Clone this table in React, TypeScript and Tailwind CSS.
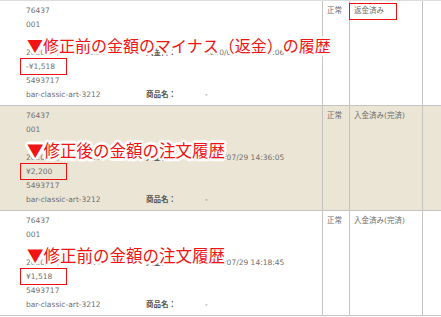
import * as React from "react"

type Row = {
  bg: string
  note: string
  noteSize: string
  date1: string
  date2: string
  price: string
  status: string
  statusBoxed?: boolean
}

const rows: Row[] = [
  {
    bg: "bg-white",
    note: "▼修正前の金額のマイナス（返金）の履歴",
    noteSize: "text-[16px]",
    date1: "2020/07/29 14:36:05",
    date2: "2020/07/29 14:36:06",
    price: "-¥1,518",
    status: "返金済み",
    statusBoxed: true,
  },
  {
    bg: "bg-[#ebe5d5]",
    note: "▼修正後の金額の注文履歴",
    noteSize: "text-[16.5px]",
    date1: "2020/07/29 14:36:05",
    date2: "2020/07/29 14:36:05",
    price: "¥2,200",
    status: "入金済み(完済)",
  },
  {
    bg: "bg-white",
    note: "▼修正前の金額の注文履歴",
    noteSize: "text-[16.5px]",
    date1: "2020/07/29 14:18:45",
    date2: "2020/07/29 14:18:45",
    price: "¥1,518",
    status: "入金済み(完済)",
  },
]

function OrderRow({ row }: { row: Row }) {
  return (
    <div className={`relative flex border-b border-[#c4c4c4] ${row.bg}`}>
      <div className="w-[323px] shrink-0 border-r border-[#c4c4c4] pl-[26px] pt-[3px] pb-[3px]">
        <div>76437</div>
        <div>001</div>
        <div>&nbsp;</div>
        <div className="flex">
          <span className="w-[120px]">{row.date1}</span>
          <span className="w-[59px] font-bold text-[#555]">入金日：</span>
          <span>{row.date2}</span>
        </div>
        <div>
          <span className="relative inline-block">
            {row.price}
            <span className="absolute -left-[6px] -top-[2px] h-[17px] w-[47px] border-[1.5px] border-[#ee1111]" />
          </span>
        </div>
        <div>5493717</div>
        <div className="flex">
          <span className="w-[120px]">bar-classic-art-3212</span>
          <span className="w-[59px] font-bold text-[#555]">商品名：</span>
          <span>-</span>
        </div>
      </div>
      <div className="w-[27px] shrink-0 border-r border-[#c4c4c4] pl-[4px] pt-[3px]">正常</div>
      <div className="w-[73px] shrink-0 border-r border-[#c4c4c4] pl-[4px] pt-[3px]">
        {row.statusBoxed ? (
          <span className="relative inline-block">
            {row.status}
            <span className="absolute -left-[5px] -top-[1px] h-[17px] w-[48px] border-[1.5px] border-[#ee1111]" />
          </span>
        ) : (
          row.status
        )}
      </div>
      <div className="flex-1" />
      <div
        className={`absolute left-[27px] top-[36px] whitespace-nowrap font-['Noto_Sans_CJK_JP',sans-serif] ${row.noteSize} leading-[16px] font-normal text-[#f01414] [text-shadow:2px_0_0_#fff,-2px_0_0_#fff,0_2px_0_#fff,0_-2px_0_#fff,2px_2px_0_#fff,-2px_-2px_0_#fff,2px_-2px_0_#fff,-2px_2px_0_#fff,3px_0_1px_#fff,-3px_0_1px_#fff,0_3px_1px_#fff,0_-3px_1px_#fff]`}
      >
        {row.note}
      </div>
    </div>
  )
}

export default function App() {
  return (
    <div className="h-[317px] w-[441px] overflow-hidden bg-white font-['DejaVu_Sans','Noto_Sans_CJK_JP',sans-serif] text-[7.5px] leading-[14px] text-[#707070]">
      <div className="border-t border-[#dddddd]">
        {rows.map((row, i) => (
          <OrderRow key={i} row={row} />
        ))}
      </div>
    </div>
  )
}
